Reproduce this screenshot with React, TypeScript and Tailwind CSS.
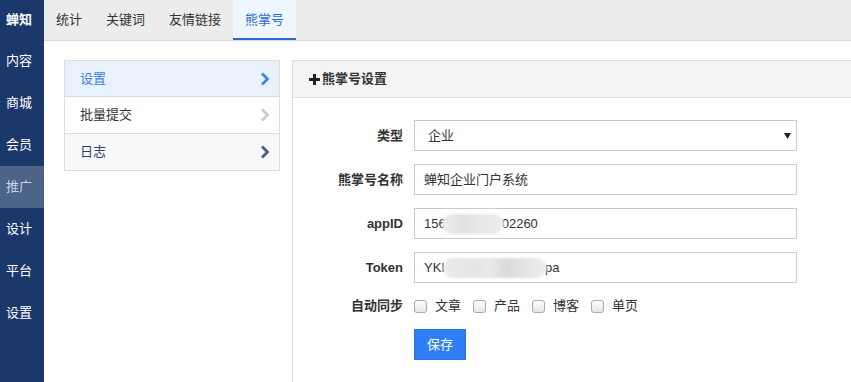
import { ReactNode } from "react";

const navItems = ["内容", "商城", "会员", "推广", "设计", "平台", "设置"];
const tabs = ["统计", "关键词", "友情链接", "熊掌号"];

const Chevron = ({ color }: { color: string }) => (
  <svg width="10" height="14" viewBox="0 0 10 14">
    <polyline points="2,1.5 7.5,7 2,12.5" fill="none" stroke={color} strokeWidth="2.8" />
  </svg>
);

const Checkbox = ({ label }: { label: string }) => (
  <label className="flex items-center">
    <span className="w-[13px] h-[13px] rounded-[3px] border border-[#a9a9a9] bg-[linear-gradient(#fdfdfd,#e6e6e6)]"></span>
    <span className="ml-[8px] mr-[12px] text-[#333]">{label}</span>
  </label>
);

const Row = ({ label, children }: { label: string; children: ReactNode }) => (
  <div className="flex items-center">
    <div className="w-[110px] text-right font-bold text-[#333]">{label}</div>
    <div className="ml-[11px] w-[383px]">{children}</div>
  </div>
);

const Blob = ({ w, dark }: { w: number; dark?: boolean }) => (
  <span
    className={
      "inline-block h-[20px] align-middle rounded-full blur-[1px] -mr-[2px] " +
      (dark
        ? "-ml-[2px] bg-[linear-gradient(90deg,#ebebeb_0%,#e4e4e4_30%,#e9e9e9_45%,#d9d9d9_62%,#e3e3e3_75%,#eeeeee_100%)]"
        : "-ml-[4px] bg-[linear-gradient(90deg,#ececec_0%,#e2e2e2_35%,#e8e8e8_60%,#eeeeee_100%)]")
    }
    style={{ width: w }}
  ></span>
);

export default function App() {
  return (
    <div className="flex h-[382px] w-[851px] overflow-hidden bg-white text-[13px] font-['Liberation_Sans','Noto_Sans_CJK_SC',sans-serif]">
      {/* sidebar */}
      <div className="w-[44px] shrink-0 bg-[#1a386a] text-white">
        <div className="h-[40px] flex items-center pl-[6px] font-bold">蝉知</div>
        {navItems.map((item) => (
          <div
            key={item}
            className={
              "h-[42px] flex items-center pl-[6px] " +
              (item === "推广" ? "bg-[#4b6488] text-[#c9d3e2]" : "")
            }
          >
            {item}
          </div>
        ))}
      </div>

      <div className="flex-1 flex flex-col">
        {/* tabs */}
        <div className="h-[41px] flex bg-[#ececec] border-b border-[#dcdcdc]">
          {tabs.map((tab) => (
            <div
              key={tab}
              className={
                "px-3 h-[40px] flex items-center " +
                (tab === "熊掌号"
                  ? "bg-[#eef6ff] text-[#2a6bd2] border-b-2 border-[#2a6bd2] pt-[2px]"
                  : "text-[#333]")
              }
            >
              {tab}
            </div>
          ))}
        </div>

        <div className="flex flex-1 pl-[20px] pt-[19px]">
          {/* sub menu */}
          <div className="w-[216px] shrink-0 self-start border border-[#dddddd]">
            <div className="h-[36px] flex items-center justify-between pl-[15px] pr-[9px] bg-[#e9f1fb] text-[#3b7ee6] border-b border-[#dddddd]">
              设置
              <Chevron color="#3d84f0" />
            </div>
            <div className="h-[37px] flex items-center justify-between pl-[15px] pr-[9px] bg-white text-[#333] border-b border-[#dddddd]">
              批量提交
              <Chevron color="#cccccc" />
            </div>
            <div className="h-[36px] flex items-center justify-between pl-[15px] pr-[9px] bg-[#f9f9f9] text-[#34406a]">
              日志
              <Chevron color="#4a5d86" />
            </div>
          </div>

          {/* panel */}
          <div className="ml-[12px] flex-1 border-l border-t border-[#dddddd]">
            <div className="h-[37px] flex items-center pl-[16px] bg-[#f4f4f4] border-b border-[#dddddd] font-bold text-[#333]">
              <svg width="11" height="11" viewBox="0 0 11 11" className="mr-[2px]">
                <rect x="4" y="0" width="3" height="11" fill="#222" />
                <rect x="0" y="4" width="11" height="3" fill="#222" />
              </svg>
              熊掌号设置
            </div>

            <div className="pt-[22px] flex flex-col gap-[13px]">
              <Row label="类型">
                <div className="h-[31px] flex items-center justify-between border border-[#cccccc] pl-[13px] pr-[5px] text-[#333]">
                  <span>企业</span>
                  <svg width="7" height="6" viewBox="0 0 7 6">
                    <polygon points="0,0 7,0 3.5,6" fill="#222" />
                  </svg>
                </div>
              </Row>
              <Row label="熊掌号名称">
                <div className="h-[31px] flex items-center border border-[#cccccc] px-[9px] text-[#333]">
                  蝉知企业门户系统
                </div>
              </Row>
              <Row label="appID">
                <div className="h-[31px] flex items-center border border-[#cccccc] px-[9px] text-[#333]">
                  156
                  <Blob w={62} />
                  02260
                </div>
              </Row>
              <Row label="Token">
                <div className="h-[31px] flex items-center border border-[#cccccc] px-[9px] text-[#333]">
                  YKI
                  <Blob w={104} dark />
                  pa
                </div>
              </Row>
              <Row label="自动同步">
                <div className="h-[20px] flex items-center">
                  <Checkbox label="文章" />
                  <Checkbox label="产品" />
                  <Checkbox label="博客" />
                  <Checkbox label="单页" />
                </div>
              </Row>
              <Row label="">
                <button className="w-[52px] h-[31px] bg-[#2f7ef5] border border-[#2a72e0] text-white">保存</button>
              </Row>
            </div>
          </div>
        </div>
      </div>
    </div>
  );
}
